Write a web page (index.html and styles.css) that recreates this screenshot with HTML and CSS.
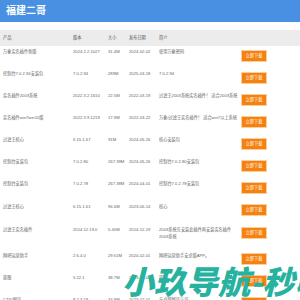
FILE: index.html
```html
<!DOCTYPE html>
<html lang="zh-CN">
<head>
    <meta charset="UTF-8">
    <meta name="viewport" content="width=device-width, initial-scale=1.0">
    <title>福建二哥</title>
    <link rel="stylesheet" href="styles.css">
</head>
<body>

<div class="header">
    <h1>福建二哥</h1>
</div>

<table class="soft-list">
    <colgroup>
        <col class="c-name">
        <col class="c-ver">
        <col class="c-size">
        <col class="c-date">
        <col class="c-desc">
        <col class="c-btn">
    </colgroup>
    <thead>
        <tr>
            <th>产品</th>
            <th>版本</th>
            <th>大小</th>
            <th>发布日期</th>
            <th>简介</th>
            <th></th>
        </tr>
    </thead>
    <tbody>
        <tr>
            <td>万象实名插件新版</td>
            <td>2024.2.2.1027</td>
            <td>31.4M</td>
            <td>2024-02-02</td>
            <td>使用万象密码</td>
            <td><a class="dl-btn" href="#">立即下载</a></td>
        </tr>
        <tr>
            <td>控制台7.0.2.94安装包</td>
            <td>7.0.2.94</td>
            <td>289M</td>
            <td>2025-03-18</td>
            <td>7.0.2.94</td>
            <td><a class="dl-btn" href="#">立即下载</a></td>
        </tr>
        <tr>
            <td>实名插件2003系统</td>
            <td>2022.3.2.1610</td>
            <td>22.5M</td>
            <td>2022-03-19</td>
            <td>过滤王2003系统实名插件！ 适合2003系统</td>
            <td><a class="dl-btn" href="#">立即下载</a></td>
        </tr>
        <tr>
            <td>实名插件win7win10版</td>
            <td>2022.3.9.1219</td>
            <td>17.9M</td>
            <td>2022-03-22</td>
            <td>万象/过滤王实名插件！ 适合win7以上系统</td>
            <td><a class="dl-btn" href="#">立即下载</a></td>
        </tr>
        <tr>
            <td>过滤王核心</td>
            <td>6.15.1.67</td>
            <td>91M</td>
            <td>2024-05-26</td>
            <td>核心安装包</td>
            <td><a class="dl-btn" href="#">立即下载</a></td>
        </tr>
        <tr>
            <td>控制台安装包</td>
            <td>7.0.2.80</td>
            <td>267.39M</td>
            <td>2024-05-26</td>
            <td>控制台7.0.2.80安装包</td>
            <td><a class="dl-btn" href="#">立即下载</a></td>
        </tr>
        <tr>
            <td>控制台安装包</td>
            <td>7.0.2.78</td>
            <td>267.38M</td>
            <td>2024-04-01</td>
            <td>控制台7.0.2.78安装包</td>
            <td><a class="dl-btn" href="#">立即下载</a></td>
        </tr>
        <tr>
            <td>过滤王核心</td>
            <td>6.15.1.61</td>
            <td>96.6M</td>
            <td>2023-06-14</td>
            <td>核心</td>
            <td><a class="dl-btn" href="#">立即下载</a></td>
        </tr>
        <tr class="tall">
            <td>过滤王实名插件</td>
            <td>2014.12.19.0</td>
            <td>5.45M</td>
            <td>2014-12-19</td>
            <td>2003系统先安装此插件再安装实名插件<br>2003系统</td>
            <td><a class="dl-btn" href="#">立即下载</a></td>
        </tr>
        <tr>
            <td>网吧运营助手</td>
            <td>2.6.4.0</td>
            <td>29.61M</td>
            <td>2024-02-01</td>
            <td>网吧运营助手安卓版APP。</td>
            <td><a class="dl-btn" href="#">立即下载</a></td>
        </tr>
        <tr>
            <td>旋眼</td>
            <td>5.22.1</td>
            <td>38.7M</td>
            <td>2023-02-02</td>
            <td>旋眼</td>
            <td><a class="dl-btn" href="#">立即下载</a></td>
        </tr>
        <tr>
            <td>CTID网证</td>
            <td>8.2.3.19</td>
            <td>34.9M</td>
            <td>2023-02-01</td>
            <td>安卓版网证认证</td>
            <td><a class="dl-btn" href="#">立即下载</a></td>
        </tr>
    </tbody>
</table>

<div class="watermark">小玖导航-秒收</div>

</body>
</html>
```

FILE: styles.css
```css
body {
    margin: 0;
    font-family: "Liberation Sans", "Noto Sans CJK SC", sans-serif;
    background: #fff;
    color: #666;
    overflow: hidden;
    height: 300px;
}
.header {
    background: #4a90e2;
    height: 22px;
    padding-left: 6px;
}
.header h1 {
    margin: 0;
    font-size: 10px;
    line-height: 21px;
    color: #fff;
    font-weight: bold;
}
.soft-list {
    width: 100%;
    margin-top: 8px;
    border-collapse: collapse;
    table-layout: fixed;
    font-size: 4.2px;
    line-height: 7.7px;
}
.c-name { width: 73px; }
.c-ver { width: 35px; }
.c-size { width: 21px; }
.c-date { width: 30px; }
.c-desc { width: 83px; }
.soft-list th {
    background: #ececec;
    height: 16px;
    padding: 0;
    text-align: left;
    font-weight: normal;
    color: #555;
}
.soft-list td {
    padding: 2px 0 7.4px 0;
    vertical-align: top;
}
.soft-list .tall td {
    padding-top: 3px;
    padding-bottom: 8.6px;
}
.soft-list th:first-child,
.soft-list td:first-child {
    padding-left: 3px;
}
.dl-btn {
    display: inline-block;
    margin-top: 2.7px;
    width: 24px;
    height: 10px;
    line-height: 10px;
    text-align: center;
    background: #f5820f;
    box-shadow: 0 0 0 1px #fccfa3;
    color: #fff;
    text-decoration: none;
}
.watermark {
    position: absolute;
    left: 122px;
    top: 260px;
    font-family: "Noto Sans CJK SC", sans-serif;
    font-size: 32px;
    font-weight: 900;
    font-style: italic;
    color: #26b29f;
    white-space: nowrap;
    line-height: 40px;
}
```
